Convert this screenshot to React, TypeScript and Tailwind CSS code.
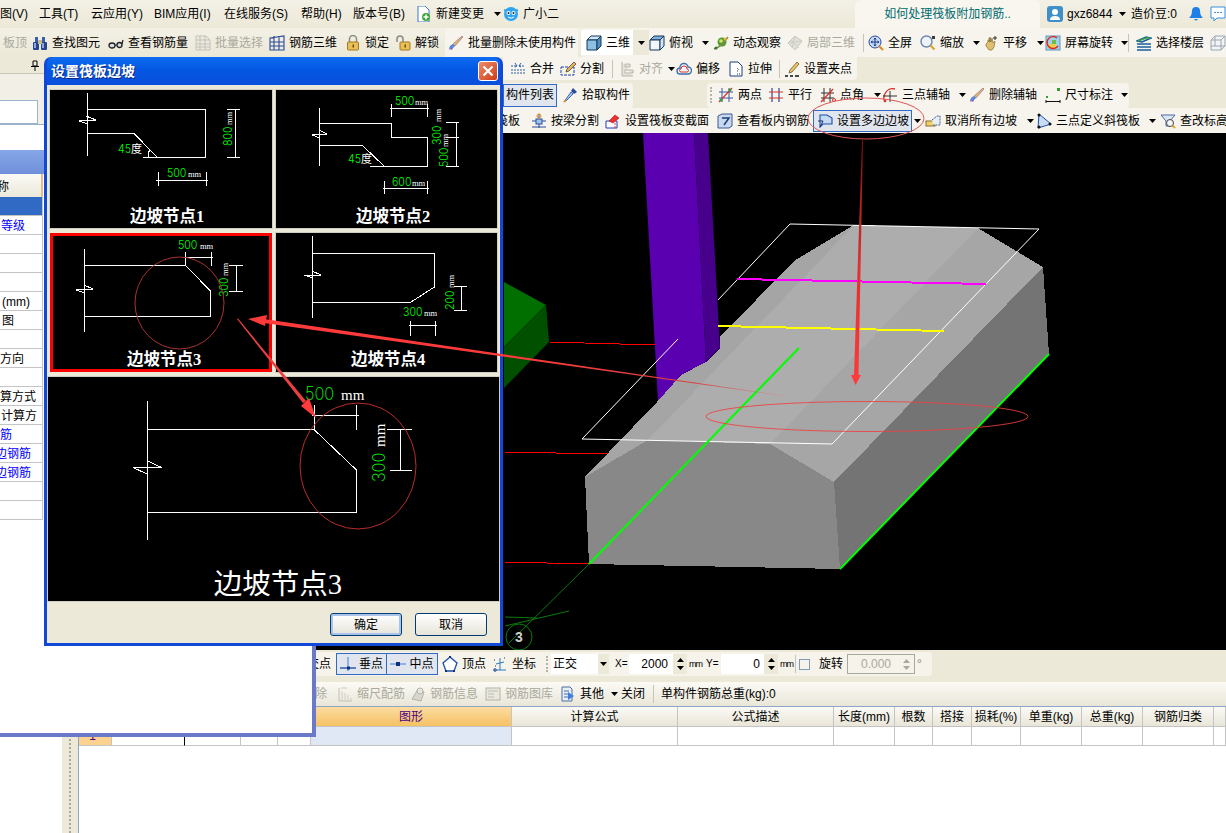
import React from 'react';
import clsx from 'clsx';

const Ic = ({ children }: { children: React.ReactNode }) => (
  <svg width="16" height="16" viewBox="0 0 16 16" className="block shrink-0">{children}</svg>
);

const Caret = ({ className }: { className?: string }) => (
  <svg width="7" height="4" viewBox="0 0 7 4" className={clsx('block shrink-0', className)}>
    <polygon points="0,0 7,0 3.5,4" fill="#000" />
  </svg>
);

// toolbar icons
const Binoc = () => (<Ic><rect x="3" y="2" width="3" height="5" fill="#3a5fae" /><rect x="10" y="2" width="3" height="5" fill="#3a5fae" /><rect x="1" y="7" width="6" height="8" rx="1" fill="#27458f" /><rect x="9" y="7" width="6" height="8" rx="1" fill="#27458f" /><rect x="6" y="5" width="4" height="4" fill="#c8b88c" /><rect x="2" y="8" width="2" height="5" fill="#8fa8de" /><rect x="10" y="8" width="2" height="5" fill="#8fa8de" /></Ic>);
const Glasses = () => (<Ic><ellipse cx="4" cy="10.5" rx="3" ry="2.5" fill="#d8dde4" stroke="#222" strokeWidth="1.3" /><ellipse cx="11.5" cy="10" rx="2.5" ry="2.5" fill="#d8dde4" stroke="#222" strokeWidth="1.3" /><path d="M7 10h2M14 9l1-4" stroke="#222" strokeWidth="1.2" fill="none" /></Ic>);
const GrayGrid = () => (<Ic><path d="M1 1h10l4 4v10H1zM1 5h14M1 9h14M1 12h14M5 1v14M10 1v14" stroke="#c3c2b8" fill="#eceae0" /></Ic>);
const Rebar = () => (<Ic><path d="M1 3l14-2v14H1zM1 7h14M1 11h14M5 1v14M10 1v14" stroke="#2b4a9b" strokeWidth="1.1" fill="none" /></Ic>);
const Lock = ({ open }: { open?: boolean }) => (<Ic>{open ? <path d="M2 7V4a3 3 0 016 0v3" stroke="#8a8a80" strokeWidth="1.5" fill="none" /> : <path d="M4.5 7V4a3.5 3.5 0 017 0v3" stroke="#8a8a80" strokeWidth="1.5" fill="none" />}<rect x={open ? 5 : 2.5} y="7" width={open ? 10 : 11} height="8" rx="1" fill="#e9bf58" stroke="#a07a20" /><rect x={open ? 9.5 : 7.5} y="9.5" width="1.5" height="3" fill="#6b4c10" /></Ic>);
const Brush = () => (<Ic><path d="M14 1l1 1-8 9-2-2z" fill="#e7b36a" stroke="#7d6a8c" strokeWidth=".6" /><path d="M5 9l2 2-3 3H2l-1 1c0-3 1-5 4-6z" fill="#5b86d6" /><path d="M2 14l3-1-1 2z" fill="#c04bb0" /></Ic>);
const Cube = ({ top = '#cfe6f4', front = '#8cc0e0', side = '#4f8dbd' }: { top?: string; front?: string; side?: string }) => (<Ic><polygon points="1,5 5,1 15,1 11,5" fill={top} stroke="#17375e" /><polygon points="1,5 11,5 11,15 1,15" fill={front} stroke="#17375e" /><polygon points="11,5 15,1 15,11 11,15" fill={side} stroke="#17375e" /></Ic>);
const Orbit = () => (<Ic><circle cx="9" cy="7" r="4.5" fill="#4f9e2a" /><circle cx="8" cy="6" r="1.8" fill="#cfe86a" /><path d="M1 14C5 13 11 8 15 2" stroke="#7c8a50" strokeWidth="1.4" fill="none" /><circle cx="12" cy="4" r="1.5" fill="#f0b030" /><circle cx="3" cy="13" r="1.5" fill="#2d7a20" /></Ic>);
const GrayCube = () => (<Ic><polygon points="1,8 8,1 15,6 8,15" fill="#e2e1d9" stroke="#c8c7bd" /><path d="M4 5l8 8M8 1l-3 12M1 8l14-2" stroke="#cfcec4" fill="none" /></Ic>);
const Full = () => (<Ic><circle cx="7" cy="7" r="6" fill="#c6d8f2" stroke="#2b4a9b" /><path d="M7 3v8M3 7h8M7 3L6 4.5M7 3l1 1.5M7 11l-1-1.5M7 11l1-1.5M3 7l1.5-1M3 7l1.5 1M11 7L9.5 6M11 7L9.5 8" stroke="#1b3a8a" fill="none" /><path d="M11 11l4 4" stroke="#e08a20" strokeWidth="2" /></Ic>);
const Zoom = () => (<Ic><circle cx="6.5" cy="6.5" r="5.5" fill="#eef3fa" stroke="#6e86ad" strokeWidth="1.4" /><path d="M10.5 10.5l4 4" stroke="#d9a52c" strokeWidth="2.2" /><rect x="12" y="1" width="3" height="3" fill="#3b3b3b" /></Ic>);
const Pan = () => (<Ic><path d="M3 9l2-2V5l1 2V3l1 4V2l1 5 1-4 1 5 2-2-1 6-2 3H6L3 11z" fill="#dfbf72" stroke="#8a6d2b" strokeWidth=".7" /><path d="M12 1v4M10 3h4" stroke="#333" /></Ic>);
const Rotate = () => (<Ic><rect x="1" y="1" width="14" height="14" fill="#9fd3e8" stroke="#5c97bd" /><rect x="3" y="9" width="8" height="4" fill="#e8cf4a" /><rect x="7" y="5" width="4" height="4" fill="#74b84e" /><path d="M13 11a6 6 0 11-1-8" stroke="#e22626" strokeWidth="1.4" fill="none" /></Ic>);
const Floors = () => (<Ic><path d="M1 6l9-4 5 1-9 4zM1 9h14M1 12h14M1 15h14" stroke="#17609c" strokeWidth="1.6" fill="none" /><path d="M2 6l8-3 4 0" stroke="#3d9e44" strokeWidth="1.4" fill="none" /></Ic>);
const WireCube = () => (<Ic><path d="M1 5l4-4h10v10l-4 4H1zM1 5h10v10M11 5l4-4M5 1v10H1M5 11h10" stroke="#9aa5ae" fill="#f2f4f6" /></Ic>);
const Merge = () => (<Ic><path d="M1 5h6M9 5h6M1 12h14M1 9h14" stroke="#2b5ea8" strokeDasharray="2 1" /><path d="M5 2l2 3-2 1M11 2L9 5l2 1" stroke="#2b5ea8" fill="none" /></Ic>);
const Split = () => (<Ic><rect x="1" y="6" width="13" height="8" fill="#f7f5df" stroke="#1f3cc0" strokeDasharray="3 1" /><path d="M14 1l2 2-7 7-3 1 1-3z" fill="#e6b35a" stroke="#333" strokeWidth=".7" /></Ic>);
const AlignIc = () => (<Ic><path d="M3 1v14h11M6 3h5v3H6zM6 9h8v3H6z" stroke="#b8b7ad" fill="#e3e2d8" /></Ic>);
const Offset = () => (<Ic><path d="M4 13a3 3 0 010-6 4 4 0 018-1 3.5 3.5 0 010 7z" fill="#f4f6fa" stroke="#3a72ad" strokeWidth="1.4" /><path d="M5 11a1.5 1.5 0 010-3 3 3 0 016 0 1.5 1.5 0 010 3z" fill="none" stroke="#d9322a" /></Ic>);
const Stretch = () => (<Ic><path d="M2 1h8l4 4v10H2z" fill="#fff" stroke="#1c3f7a" /><path d="M9 7l2 2M9 10h1M9 13h3" stroke="#1c3f7a" strokeDasharray="1 1" /></Ic>);
const Grip = () => (<Ic><path d="M1 15h3M6 15h3M11 15h4" stroke="#111" strokeWidth="1.5" /><path d="M13 1l2 2-7 8-3 1 1-3z" fill="#e9c56a" stroke="#6d5a2a" strokeWidth=".8" /></Ic>);
const Dropper = () => (<Ic><path d="M11 1l4 4-3 2-3-3z" fill="#2b4a9b" /><path d="M9 5l2 2-6 6-3 2 2-3z" fill="#9cc4ec" stroke="#2b4a9b" strokeWidth=".8" /><path d="M2 15l2-2" stroke="#e08a20" strokeWidth="1.5" /></Ic>);
const TwoPt = () => (<Ic><path d="M4 1v14M11 1v14M1 5h14M1 11h14" stroke="#3b56a8" /><path d="M1 15L14 1" stroke="#d9322a" strokeWidth="1.2" /><circle cx="3" cy="13" r="1.5" fill="#2f9e33" /><circle cx="12" cy="3" r="1.5" fill="#2f9e33" /></Ic>);
const Parallel = () => (<Ic><path d="M4 1v14M11 1v14" stroke="#2b4a9b" strokeWidth="1.2" /><path d="M1 5h14M1 11h14" stroke="#d9322a" strokeWidth="1.2" /></Ic>);
const PtAngle = () => (<Ic><path d="M4 1v14M10 1v14M1 6h13M1 11h13" stroke="#333" /><path d="M1 15L13 2" stroke="#d9322a" strokeWidth="1.3" /><circle cx="14" cy="13" r="1.5" fill="none" stroke="#d9322a" /></Ic>);
const Arc3 = () => (<Ic><path d="M3 15A9 9 0 0113 2" stroke="#d9322a" fill="none" strokeWidth="1.3" /><path d="M8 4v11M1 9h14" stroke="#333" /><circle cx="3" cy="14" r="1.3" fill="#d9322a" /></Ic>);
const Dim = () => (<Ic><rect x="1" y="9" width="2" height="2" fill="#2f9e33" /><rect x="12" y="1" width="3" height="3" fill="#2f9e33" /><path d="M1 13v3M15 13v3M1 14.5h14" stroke="#111" /></Ic>);
const Beam = () => (<Ic><rect x="5" y="6" width="6" height="5" fill="#9cc4ec" stroke="#2b4a9b" /><path d="M1 8h4M11 8h4M1 14h14M8 1v4M8 11v4" stroke="#2b4a9b" /><circle cx="8" cy="3" r="2" fill="none" stroke="#e08a20" /></Ic>);
const Section = () => (<Ic><path d="M1 8h11v7H1z" fill="#fff" stroke="#1f3cc0" /><path d="M4 8l6-6 4 3-6 5z" fill="#e33" stroke="#a11" strokeWidth=".6" /><path d="M10 10v5" stroke="#e33" strokeDasharray="2 1" /></Ic>);
const ViewRebar = () => (<Ic><path d="M1 3l4-2h10v12l-3 2H1z" fill="#c9d8ee" stroke="#3a5a94" /><path d="M5 5h7L7 12" stroke="#1c3f7a" strokeWidth="1.5" fill="none" /></Ic>);
const MultiSlope = () => (<Ic><path d="M3 14l3-3H15V5L10 2H3z" fill="#c6daf2" stroke="#1c4fa8" strokeWidth="1.1" /><path d="M1 8h5l-3 6" stroke="#1c2f7a" fill="none" /></Ic>);
const Cancel = () => (<Ic><rect x="1" y="8" width="9" height="5" fill="#f1d26a" stroke="#8a6d2b" /><path d="M7 7l5-4h3v9H8" fill="#e9edf4" stroke="#3a5a94" strokeDasharray="2 1" /></Ic>);
const Tri = () => (<Ic><polygon points="3,1 15,11 2,15" fill="#c8dcf4" stroke="#1c4fa8" /><circle cx="3" cy="2" r="1.5" fill="#111" /><circle cx="14" cy="11" r="1.5" fill="#111" /><circle cx="3" cy="14" r="1.5" fill="#111" /></Ic>);
const CheckH = () => (<Ic><path d="M1 2h14l-5 6v5H6V8z" fill="#dde6f2" stroke="#4a6da3" /><circle cx="10" cy="10" r="3.5" fill="#f5f7fb" stroke="#444" /><path d="M12.5 12.5L15 15" stroke="#d9a52c" strokeWidth="2" /></Ic>);
const DocAdd = () => (<Ic><path d="M2 0h7l4 4v12H2z" fill="#fff" stroke="#3f78c4" /><circle cx="10" cy="11" r="4" fill="#43a43a" /><path d="M10 8.5v5M7.5 11h5" stroke="#fff" strokeWidth="1.5" /></Ic>);
const Mascot = () => (<Ic><circle cx="8" cy="8" r="7" fill="#2fa4f0" /><path d="M1 4l3 1M15 4l-3 1" stroke="#2fa4f0" strokeWidth="2" /><circle cx="5.5" cy="7" r="2" fill="#fff" /><circle cx="10.5" cy="7" r="2" fill="#fff" /><circle cx="5.5" cy="7" r="1" fill="#123" /><circle cx="10.5" cy="7" r="1" fill="#123" /><path d="M5 11q3 2.5 6 0" stroke="#fff" fill="none" /></Ic>);
const Avatar = () => (<Ic><rect x="0" y="0" width="16" height="16" rx="3" fill="#3f8fca" /><circle cx="8" cy="6" r="3" fill="#fff" /><path d="M3 14q0-4 5-4t5 4z" fill="#fff" /></Ic>);
const Bell = () => (<Ic><path d="M8 1a4 4 0 00-4 4c0 4-2 6-3 7h14c-1-1-3-3-3-7a4 4 0 00-4-4z" fill="#1f7fe8" /><path d="M6 13q2 3 4 0z" fill="#1f7fe8" /></Ic>);
const Chat = () => (<Ic><path d="M1 1h14v11H7l-3 3v-3H1z" fill="#fff" stroke="#3a8fe0" /><path d="M4 6.5h2M7 6.5h2M10 6.5h2" stroke="#3a8fe0" /></Ic>);
const Perp = () => (<Ic><path d="M8 1v14" stroke="#6f9fe0" strokeWidth="1.5" /><path d="M0 12h16" stroke="#2b5ea8" strokeWidth="1.5" /><rect x="7" y="10.5" width="3" height="3" fill="#12307a" /></Ic>);
const Mid = () => (<Ic><path d="M0 8h16" stroke="#6f9fe0" strokeWidth="1.5" /><rect x="6" y="6" width="4" height="4" fill="#12307a" /></Ic>);
const Vertex = () => (<Ic><polygon points="8,1 15,7 12,15 4,15 1,7" fill="#fff" stroke="#1c4fa8" strokeWidth="1.3" /><rect x="7" y="0" width="2" height="2" fill="#12307a" /><rect x="3" y="14" width="2" height="2" fill="#12307a" /><rect x="11" y="14" width="2" height="2" fill="#12307a" /></Ic>);
const Coord = () => (<Ic><path d="M8 2v12M2 14h12M4 8l8-2" stroke="#2b7ac0" /><path d="M2 4h2M12 2h2M3 10h2" stroke="#333" strokeDasharray="1 1" /><circle cx="3" cy="14" r="1.3" fill="none" stroke="#2b4a9b" /></Ic>);
const Scale = () => (<Ic><path d="M2 2v13h13" stroke="#c2c1b6" fill="none" /><path d="M5 15V5M8 15V7M11 15V9M14 15v-3M4 2h6" stroke="#cfcec3" fill="none" /></Ic>);
const GrayInfo = () => (<Ic><path d="M2 13l6-10 6 3-3 9z" fill="#d8d7cd" stroke="#b4b3a9" /><circle cx="10" cy="5" r="3" fill="#e7e6dc" stroke="#b4b3a9" /></Ic>);
const GrayLib = () => (<Ic><rect x="1" y="2" width="14" height="12" fill="#e9e8de" stroke="#b4b3a9" /><path d="M3 5h10M3 8h6M3 11h6" stroke="#bcbbb0" /></Ic>);
const Other = () => (<Ic><path d="M2 1h8l2 2v12H2z" fill="#e9eff8" stroke="#4a6da3" /><path d="M4 5h5M4 8h4M4 11h4" stroke="#4a6da3" /><path d="M8 6l6 4-6 4z" fill="#3b7de0" /></Ic>);
const PinIc = () => (
  <svg width="8" height="11" viewBox="0 0 8 11" className="block">
    <path d="M2 1h4v5H2zM0 6.5h8M4 7v4" stroke="#000" fill="none" />
  </svg>
);

type ToolProps = { w: string; icon?: React.ReactNode; label: string; dim?: boolean; caret?: string };

function Tool({ w, icon, label, dim, caret }: ToolProps) {
  return (
    <div className={clsx('flex items-center shrink-0 h-full gap-[4px]', w)}>
      {icon}
      <span className={clsx('whitespace-nowrap', dim ? 'text-[#aaa99d]' : 'text-black')}>{label}</span>
      {caret && <Caret className={caret} />}
    </div>
  );
}

const Sep = ({ className }: { className?: string }) => (
  <div className={clsx('w-px h-[18px] bg-[#c6c4b6] shrink-0', className)} />
);

// ------------ CAD drawings in the dialog. viewBoxes use page coordinates.
function G({ x, y, children, size = 12, rotate }: { x: number; y: number; children: string; size?: number; rotate?: boolean }) {
  return (
    <text
      x={x}
      y={y}
      fill="#00ff00"
      fontSize={size}
      fontWeight={size > 12 ? 200 : 300}
      fontFamily="Inter, Liberation Sans, sans-serif"
      textLength={children.length * size * 0.54}
      lengthAdjust="spacingAndGlyphs"
      transform={rotate ? `rotate(-90 ${x} ${y})` : undefined}
    >
      {children}
    </text>
  );
}

function W({ x, y, children, size = 8.5, rotate }: { x: number; y: number; children: string; size?: number; rotate?: boolean }) {
  return (
    <text x={x} y={y} fill="#fff" fontSize={size} fontFamily="Liberation Serif, serif" transform={rotate ? `rotate(-90 ${x} ${y})` : undefined}>
      {children}
    </text>
  );
}

function Title({ x, y, size = 16.5, bold = true, children }: { x: number; y: number; size?: number; bold?: boolean; children: React.ReactNode }) {
  return (
    <text x={x} y={y} fill="#fff" fontSize={size} fontWeight={bold ? 700 : 400} textAnchor="middle" fontFamily="Liberation Serif, Noto Sans CJK SC, serif">
      {children}
    </text>
  );
}

const Wire = ({ d }: { d: string }) => <path d={d} stroke="#fff" strokeWidth="1" fill="none" shapeRendering="crispEdges" />;

function Panel1() {
  return (
    <svg viewBox="50 90 222 138" className="block w-full h-full">
      <Wire d="M87.5 93V156M87.5 109.5H205.5V157H143M87.5 133.5H134L157 157" />
      <Wire d="M79 121L96 120L86 116M79 121L88 124" />
      <Wire d="M235.5 109V157M227 109.5H240M227 157.5H240M158.5 172V186M206 172V186M156 180.5H208" />
      <Wire d="M148 157Q148 152 150 150" />
      <G x={118} y={153}>45</G>
      <text x={131} y={153} fill="#fff" fontSize={11} fontFamily="Noto Sans CJK SC, sans-serif">度</text>
      <G x={167} y={177}>500</G>
      <W x={188} y={177}>mm</W>
      <G x={232} y={146} rotate>800</G>
      <W x={232} y={125} rotate>mm</W>
      <Title x={167} y={222}>边坡节点1</Title>
    </svg>
  );
}

function Panel2() {
  return (
    <svg viewBox="276 90 221 138" className="block w-full h-full">
      <Wire d="M319.5 108V165.5M319.5 123.5H391.5V137.5H427.5V166.5H370M319.5 145.5H362.5L384.5 166.5" />
      <Wire d="M312 135L327 134L319 130M312 135L320 138" />
      <Wire d="M391.5 104V117M427.5 104V117M390 108.5H429M456.5 122V166M446 122.5H459M446 137.5H459M446 166.5H459M384.5 181V194M427.5 181V194M383 188.5H429" />
      <G x={395} y={105}>500</G>
      <W x={415} y={105}>mm</W>
      <G x={392} y={186}>600</G>
      <W x={412} y={186}>mm</W>
      <G x={348} y={163}>45</G>
      <text x={361} y={163} fill="#fff" fontSize={11} fontFamily="Noto Sans CJK SC, sans-serif">度</text>
      <G x={441} y={145} rotate>300</G>
      <W x={441} y={122} rotate>mm</W>
      <G x={448} y={167} rotate>500</G>
      <W x={448} y={147} rotate>mm</W>
      <Title x={393} y={222}>边坡节点2</Title>
    </svg>
  );
}

function Panel3() {
  return (
    <svg viewBox="50 233 222 139" className="block w-full h-full">
      <rect x="51.5" y="234.5" width="219" height="136" fill="none" stroke="#ff0000" strokeWidth="3" />
      <Wire d="M84.5 249V332M84.5 265.5H185.5L210.5 291V316.5H84.5" />
      <Wire d="M76 290L93 289L84 285M76 290L85 293" />
      <Wire d="M185.5 252V266M211 252V266M183 257.5H213M236.5 265V292M229 265.5H243M229 291.5H243" />
      <G x={178} y={249}>500</G>
      <W x={200} y={249}>mm</W>
      <G x={228} y={297} rotate>300</G>
      <W x={228} y={276} rotate>mm</W>
      <Title x={164} y={365}>边坡节点3</Title>
    </svg>
  );
}

function Panel4() {
  return (
    <svg viewBox="276 233 221 139" className="block w-full h-full">
      <Wire d="M312.5 236V318M312.5 253.5H434.5V287L411 302H312.5" />
      <Wire d="M304 275L321 275L312 271M304 275L313 278" />
      <Wire d="M461.5 286V310M454 286.5H467M454 310.5H467M410.5 321V336M435 321V336M409 325.5H437" />
      <G x={403} y={316}>300</G>
      <W x={424} y={316}>mm</W>
      <G x={454} y={310} rotate>200</G>
      <W x={454} y={288} rotate>mm</W>
      <Title x={388} y={365}>边坡节点4</Title>
    </svg>
  );
}

function PanelBig() {
  return (
    <svg viewBox="48 377 451 224" className="block w-full h-full">
      <Wire d="M147.5 401V540M147.5 429.5H314L356.5 470V512.5H147.5" />
      <Wire d="M133 467.5H161.5L148 461M133 467.5L147 474" />
      <Wire d="M314.5 405V430M356.5 405V430M312 415.5H359M400.5 429V471M387 429.5H412M390 470.5H412" />
      <G x={305} y={400} size={18}>500</G>
      <W x={341} y={400} size={15}>mm</W>
      <G x={385} y={482} rotate size={18}>300</G>
      <W x={385} y={447} rotate size={15}>mm</W>
      <Title x={278} y={594} size={28.5} bold={false}>边坡节点3</Title>
    </svg>
  );
}

function Scene() {
  return (
    <svg viewBox="44 133 1182 517" className="block w-full h-full">
      {/* green block */}
      <polygon points="504,282 546,305 504,347" fill="#006f00" />
      <polygon points="504,347 546,305 549,342 504,388" fill="#005000" />
      {/* purple column */}
      <polygon points="643,133 694,133 706,362 681,375 658,402" fill="#5a00b0" />
      <polygon points="694,133 708,133 720,348 706,362" fill="#46008c" />
      {/* red axis lines */}
      <g stroke="#ff0000" strokeWidth="1" shapeRendering="crispEdges" fill="none">
        <path d="M549 342L655 345" />
        <path d="M504 452L607 454" />
        <path d="M504 562L589 564" />
      </g>
      {/* slab */}
      <g shapeRendering="crispEdges">
        <polygon points="585,477 648,440 854,225 794,261 720,337 720,348 706,362 681,375 657,402" fill="#a5a5a5" />
        <polygon points="648,440 770,444 978,228 854,225" fill="#adadad" />
        <polygon points="770,444 834,482 1043,267 978,228" fill="#a6a6a6" />
        <polygon points="585,477 648,440 770,444 834,482 840,569 589,564" fill="#888888" />
        <polygon points="834,482 1043,267 1049,354 840,569" fill="#747474" />
      </g>
      {/* plan outline */}
      <path d="M790 224L1039 229L832 444L582 439L678 339M718 300L790 224" stroke="#fff" strokeWidth="1" fill="none" />
      <path d="M737 279L986 284" stroke="#ff00ff" strokeWidth="2" shapeRendering="crispEdges" />
      <path d="M718 326L944 331" stroke="#ffff00" strokeWidth="2" shapeRendering="crispEdges" />
      <path d="M799 348L589 564M1049 354L840 569" stroke="#00ff00" strokeWidth="2" />
      <path d="M589 564L509 643M505 617L537 618M569 611L505 626" stroke="#0a7a0a" strokeWidth="1" fill="none" />
      <circle cx="519" cy="637" r="13" fill="none" stroke="#0a7a0a" />
      <text x="519" y="642" fill="#cfcfcf" fontSize="14" fontWeight="700" textAnchor="middle" fontFamily="Liberation Sans, sans-serif">3</text>
    </svg>
  );
}

// red marks somebody painted over the screenshot
function Annotations() {
  return (
    <svg viewBox="0 0 1226 833" className="absolute inset-0 z-30 w-full h-full pointer-events-none">
      <defs>
        <linearGradient id="fade" gradientUnits="userSpaceOnUse" x1="500" y1="354" x2="783" y2="396">
          <stop offset="0" stopColor="#ff3a3a" />
          <stop offset="0.7" stopColor="#d84040" />
          <stop offset="1" stopColor="#d88080" stopOpacity="0.6" />
        </linearGradient>
        <linearGradient id="drop" gradientUnits="userSpaceOnUse" x1="862" y1="140" x2="856" y2="385">
          <stop offset="0" stopColor="#7a1010" />
          <stop offset="0.5" stopColor="#e03030" />
          <stop offset="1" stopColor="#ff3a3a" />
        </linearGradient>
      </defs>
      <ellipse cx="866" cy="118.5" rx="58" ry="20.5" fill="none" stroke="#e25555" strokeWidth="1" />
      <polygon points="862,140 863,140 858.5,375 854,375" fill="url(#drop)" />
      <polygon points="851,375 861,375 855.5,385" fill="#ff3a3a" />
      <ellipse cx="867" cy="416.5" rx="161" ry="15" fill="none" stroke="#f04040" strokeWidth="1" opacity="0.85" />
      <polygon points="264,319 264,323 783,396 783,395.5" fill="url(#fade)" />
      <polygon points="248,319 267,315 265,326" fill="#ff3a3a" />
      <polygon points="237,319 238,318.5 306,401 303,403" fill="#e94040" />
      <polygon points="316,418 301,406 309,398" fill="#ff3a3a" />
      <ellipse cx="179.5" cy="303" rx="44.5" ry="46" fill="none" stroke="#a83232" strokeWidth="1" />
      <ellipse cx="358" cy="466" rx="58" ry="63" fill="none" stroke="#b92c2c" strokeWidth="1" />
    </svg>
  );
}

const panelRows: { text: string; cls?: string; sel?: boolean }[] = [
  { text: '', sel: true },
  { text: '等级', cls: 'text-[#0000ff] ml-px' },
  { text: '' },
  { text: '' },
  { text: '' },
  { text: '(mm)', cls: 'text-black ml-[2px]' },
  { text: '图', cls: 'text-black ml-[2px]' },
  { text: '' },
  { text: '方向', cls: 'text-black' },
  { text: '' },
  { text: '算方式', cls: 'text-black' },
  { text: '计算方', cls: 'text-black ml-px' },
  { text: '筋', cls: 'text-[#0000ff]' },
  { text: '边钢筋', cls: 'text-[#0000ff] ml-[-5px]' },
  { text: '边钢筋', cls: 'text-[#0000ff] ml-[-5px]' },
  { text: '' },
  { text: '' },
];

const columns = ['', '', '', '', '', '图形', '计算公式', '公式描述', '长度(mm)', '根数', '搭接', '损耗(%)', '单重(kg)', '总重(kg)', '钢筋归类', ''];

const DlgButton = ({ label, active }: { label: string; active?: boolean }) => (
  <button
    className={clsx(
      'w-[72px] h-[23px] rounded-[3px] border border-[#003c74] bg-linear-to-b from-white to-[#e6e4da] text-[12px] text-black',
      active && 'shadow-[inset_0_0_0_2px_#a9c4ec]',
    )}
  >
    {label}
  </button>
);

export default function App() {
  return (
    <div className="relative w-[1226px] h-[833px] overflow-hidden bg-[#ece9d8] text-[12px] leading-none text-black font-['Liberation_Sans','Noto_Sans_CJK_SC',sans-serif]">
      {/* menu bar */}
      <div className="flex items-center h-[28px] bg-linear-to-b from-[#f3f0e6] to-[#ece9d8]">
        <Tool w="w-[39px]" label="图(V)" />
        <Tool w="w-[52px]" label="工具(T)" />
        <Tool w="w-[63px]" label="云应用(Y)" />
        <Tool w="w-[70px]" label="BIM应用(I)" />
        <Tool w="w-[77px]" label="在线服务(S)" />
        <Tool w="w-[52px]" label="帮助(H)" />
        <Tool w="w-[63px]" label="版本号(B)" />
        <Tool w="w-[87px]" icon={<DocAdd />} label="新建变更" caret="ml-[6px]" />
        <Tool w="w-[352px]" icon={<Mascot />} label="广小二" />
        <div className="flex items-center justify-center w-[185px] h-full rounded-t-md bg-[#f8f6ef] text-[#006a6e]">
          <span className="whitespace-nowrap">如何处理筏板附加钢筋..</span>
        </div>
        <div className="w-[7px] h-full" />
        <div className="flex items-center h-full w-[84px] gap-[4px]">
          <Avatar />
          <span>gxz6844</span>
          <Caret className="ml-[3px]" />
        </div>
        <span className="w-[57px] whitespace-nowrap">造价豆:0</span>
        <div className="w-[22px]"><Bell /></div>
        <Chat />
      </div>

      {/* main toolbar */}
      <div className="flex items-center h-[29px] bg-linear-to-b from-[#f3f0e6] to-[#ece9d8]">
        <div className="w-[34px] pl-[3px] text-[#aaa99d] whitespace-nowrap">板顶</div>
        <Tool w="w-[76px]" icon={<Binoc />} label="查找图元" />
        <Tool w="w-[87px]" icon={<Glasses />} label="查看钢筋量" />
        <Tool w="w-[74px]" icon={<GrayGrid />} label="批量选择" dim />
        <Tool w="w-[76px]" icon={<Rebar />} label="钢筋三维" />
        <Tool w="w-[50px]" icon={<Lock />} label="锁定" />
        <Tool w="w-[50px]" icon={<Lock open />} label="解锁" />
        <div className="flex items-center h-full w-[133px] pl-[3px] bg-[#f6f4ec]">
          <Tool w="w-[130px]" icon={<Brush />} label="批量删除未使用构件" />
        </div>
        <div className="flex items-center h-full flex-1 ml-[3px] rounded-l bg-[#f6f4ec]">
          <div className="flex items-center h-[25px] w-[52px] pl-[5px] bg-white shrink-0">
            <Tool w="w-[47px]" icon={<Cube />} label="三维" />
          </div>
          <div className="flex items-center justify-center h-[25px] w-[16px] bg-[#ece9d8] shrink-0"><Caret /></div>
          <Tool w="w-[64px]" icon={<Cube top="#7fb0dc" front="#f2f7fb" side="#d3e4f2" />} label="俯视" caret="ml-[5px]" />
          <Tool w="w-[74px]" icon={<Orbit />} label="动态观察" />
          <Tool w="w-[76px]" icon={<GrayCube />} label="局部三维" dim />
          <Sep />
          <div className="w-[4px]" />
          <Tool w="w-[52px]" icon={<Full />} label="全屏" />
          <Tool w="w-[63px]" icon={<Zoom />} label="缩放" caret="ml-[5px]" />
          <Tool w="w-[62px]" icon={<Pan />} label="平移" caret="ml-[6px]" />
          <Tool w="w-[83px]" icon={<Rotate />} label="屏幕旋转" caret="ml-[4px]" />
          <Sep />
          <div className="w-[7px]" />
          <Tool w="w-[74px]" icon={<Floors />} label="选择楼层" />
          <WireCube />
        </div>
      </div>

      {/* body: property panel + drawing area */}
      <div className="flex h-[593px]">
        <div className="w-[44px] shrink-0 flex flex-col bg-white overflow-hidden">
          <div className="flex items-center justify-end h-[17px] pr-[5px] border-b border-[#c8c6b8] bg-[#ece9d8]"><PinIc /></div>
          <div className="h-[51px] pt-[26px] bg-[#f2f0e6] border-b border-[#9cb0c8]">
            <div className="w-[38px] h-[24px] bg-white border-r border-y border-[#9db3cc]" />
          </div>
          <div className="h-[25px]" />
          <div className="h-[24px] bg-linear-to-b from-[#86a6e8] to-[#6f90da]" />
          <div className="h-[23px] w-[43px] pt-[2px] flex items-center overflow-hidden bg-linear-to-b from-[#fbfaf5] to-[#ebe8da] border-r-2 border-[#e6bd84]">
            <span className="ml-[-3px]">称</span>
          </div>
          {panelRows.map((r, i) => (
            <div key={i} className={clsx('h-[19px] w-[43px] pt-[2px] flex items-center shrink-0 overflow-hidden border-b border-r border-[#c4c4c4] whitespace-nowrap', r.sel && 'bg-[#316ac5]')}>
              <span className={r.cls}>{r.text}</span>
            </div>
          ))}
        </div>

        <div className="flex-1 min-w-0 flex flex-col">
          <div className="h-[25px] shrink-0 flex items-start">
            <div className="flex items-center ml-[459px] pl-[7px] w-[354px] h-[23px] rounded-br bg-[#f6f4ec]">
              <Tool w="w-[50px]" icon={<Merge />} label="合并" />
              <Tool w="w-[52px]" icon={<Split />} label="分割" />
              <Sep />
              <div className="w-[6px]" />
              <Tool w="w-[57px]" icon={<AlignIc />} label="对齐" dim caret="ml-px" />
              <Tool w="w-[52px]" icon={<Offset />} label="偏移" />
              <Tool w="w-[51px]" icon={<Stretch />} label="拉伸" />
              <Sep />
              <div className="w-[4px]" />
              <Tool w="w-[70px]" icon={<Grip />} label="设置夹点" />
            </div>
          </div>
          <div className="h-[26px] shrink-0 flex items-center">
            <div className="flex items-center ml-[459px] h-[25px] w-[130px] rounded-r bg-[#f6f4ec]">
              <div className="flex items-center justify-center w-[54px] h-[23px] shrink-0 bg-[#e1e6ee] border border-[#316ac5]">构件列表</div>
              <div className="w-[5px]" />
              <Tool w="w-[70px]" icon={<Dropper />} label="拾取构件" />
            </div>
            <div className="flex items-center ml-[74px] w-[422px] h-[25px] pl-[3px] rounded bg-[#f6f4ec]">
              <div className="w-0 h-[16px] border-l-2 border-dotted border-[#b5b3a6]" />
              <div className="w-[6px]" />
              <Tool w="w-[50px]" icon={<TwoPt />} label="两点" />
              <Tool w="w-[52px]" icon={<Parallel />} label="平行" />
              <Tool w="w-[62px]" icon={<PtAngle />} label="点角" caret="ml-[6px]" />
              <Tool w="w-[87px]" icon={<Arc3 />} label="三点辅轴" caret="ml-[5px]" />
              <Tool w="w-[76px]" icon={<Brush />} label="删除辅轴" />
              <Tool w="w-[84px]" icon={<Dim />} label="尺寸标注" caret="ml-[4px]" />
            </div>
          </div>
          <div className="h-[25px] shrink-0 flex items-center pl-[452px] bg-[#f6f4ec]">
            <Tool w="w-[35px]" label="筏板" />
            <Tool w="w-[74px]" icon={<Beam />} label="按梁分割" />
            <Tool w="w-[112px]" icon={<Section />} label="设置筏板变截面" />
            <Tool w="w-[96px]" icon={<ViewRebar />} label="查看板内钢筋" />
            <div className="flex items-center w-[99px] h-[22px] pl-[3px] shrink-0 bg-[#e1e6ee] border border-[#316ac5]">
              <Tool w="w-[94px]" icon={<MultiSlope />} label="设置多边边坡" />
            </div>
            <Caret className="ml-[2px]" />
            <div className="w-[5px]" />
            <Tool w="w-[111px]" icon={<Cancel />} label="取消所有边坡" caret="ml-[6px]" />
            <Tool w="w-[124px]" icon={<Tri />} label="三点定义斜筏板" caret="ml-[5px]" />
            <Tool w="w-[66px]" icon={<CheckH />} label="查改标高" />
          </div>
          <div className="flex-1 min-h-0 bg-black">
            <Scene />
          </div>
        </div>
      </div>

      {/* snap toolbar */}
      <div className="h-[32px] pt-[2px]">
        <div className="flex items-center h-[24px] w-[932px] pl-[307px] rounded-r bg-[#f5f3ea]">
          <Tool w="w-[29px]" label="交点" />
          <div className="flex items-center justify-center gap-[3px] w-[51px] h-[22px] shrink-0 bg-[#e1e6ee] border border-[#316ac5]"><Perp /><span>垂点</span></div>
          <div className="flex items-center justify-center gap-[3px] w-[51px] h-[22px] shrink-0 bg-[#e1e6ee] border border-[#316ac5] border-l-0"><Mid /><span>中点</span></div>
          <div className="w-[4px]" />
          <Tool w="w-[50px]" icon={<Vertex />} label="顶点" />
          <Tool w="w-[54px]" icon={<Coord />} label="坐标" />
          <div className="w-0 h-[16px] border-l-2 border-dotted border-[#b5b3a6]" />
          <div className="w-[3px]" />
          <div className="flex items-center w-[47px] h-[20px] pl-[2px] bg-white shrink-0">正交</div>
          <div className="flex items-center justify-center w-[11px] h-[20px] bg-[#ece9d8] shrink-0"><Caret /></div>
          <div className="w-[6px]" />
          <span className="w-[14px] text-[10px]">X=</span>
          <div className="flex items-center justify-end w-[44px] h-[20px] pr-[5px] bg-white shrink-0">2000</div>
          <div className="flex flex-col items-center justify-center gap-[4px] w-[14px] h-[20px] shrink-0 bg-[#ece9d8]">
            <Caret className="rotate-180" />
            <Caret />
          </div>
          <span className="w-[19px] pl-[2px] text-[9px] tracking-[-1px]">mm</span>
          <span className="w-[15px] text-[10px]">Y=</span>
          <div className="flex items-center justify-end w-[43px] h-[20px] pr-[4px] bg-white shrink-0">0</div>
          <div className="flex flex-col items-center justify-center gap-[4px] w-[14px] h-[20px] shrink-0 bg-[#ece9d8]">
            <Caret className="rotate-180" />
            <Caret />
          </div>
          <span className="w-[17px] pl-[2px] text-[9px] tracking-[-1px]">mm</span>
          <Sep className="h-[16px]" />
          <div className="w-[3px]" />
          <div className="w-[11px] h-[11px] border border-[#7f9db9] bg-[#f5f3ea] shrink-0" />
          <div className="w-[9px]" />
          <span className="w-[28px] whitespace-nowrap">旋转</span>
          <div className="flex items-center justify-between w-[68px] h-[20px] pl-[13px] pr-[4px] shrink-0 border border-[#a9a89c] text-[#aaa99d]">
            <span>0.000</span>
            <div className="flex flex-col gap-[3px]">
              <svg width="7" height="4" viewBox="0 0 7 4"><polygon points="0,4 7,4 3.5,0" fill="#aaa99d" /></svg>
              <svg width="7" height="4" viewBox="0 0 7 4"><polygon points="0,0 7,0 3.5,4" fill="#aaa99d" /></svg>
            </div>
          </div>
          <span className="ml-[2px] text-[#888]">°</span>
        </div>
      </div>

      {/* rebar toolbar */}
      <div className="flex items-center h-[24px] pl-[303px] bg-linear-to-b from-[#fbfaf5] to-[#e9e6d8]">
        <Tool w="w-[34px]" label="删除" dim />
        <Tool w="w-[73px]" icon={<Scale />} label="缩尺配筋" dim />
        <Tool w="w-[75px]" icon={<GrayInfo />} label="钢筋信息" dim />
        <Tool w="w-[75px]" icon={<GrayLib />} label="钢筋图库" dim />
        <Tool w="w-[61px]" icon={<Other />} label="其他" caret="ml-[3px]" />
        <Tool w="w-[32px]" label="关闭" />
        <Sep />
        <div className="w-[7px]" />
        <span className="whitespace-nowrap">单构件钢筋总重(kg):0</span>
      </div>

      {/* rebar table */}
      <div className="flex h-[127px] border-t border-[#8ba6c6] bg-white">
        <div className="w-[62px] shrink-0" />
        <div className="flex justify-center w-[17px] shrink-0 bg-[#ece9d8] border-r border-[#8ba6c6]">
          <div className="w-0 h-full border-l-2 border-dotted border-[#aaa89a]" />
        </div>
        <div className="flex-1 min-w-0">
          <div className="grid grid-cols-[33px_73px_56px_37px_33px_201px_166px_156px_61px_38px_39px_49px_61px_61px_71px_12px] h-[20px]">
            {columns.map((label, i) => (
              <div
                key={i}
                className={clsx(
                  'flex items-center justify-center whitespace-nowrap border-r border-b border-[#c4c4c4]',
                  i === 5 ? 'bg-linear-to-b from-[#fbdca0] to-[#f5c163] text-[#4b0082]' : 'bg-linear-to-b from-[#fbfaf5] to-[#e9e6d8]',
                )}
              >
                {label}
              </div>
            ))}
          </div>
          <div className="grid grid-cols-[33px_73px_56px_37px_33px_201px_166px_156px_61px_38px_39px_49px_61px_61px_71px_12px] h-[19px]">
            {columns.map((_, i) => (
              <div
                key={i}
                className={clsx(
                  'flex items-center justify-center border-b border-[#c4c4c4]',
                  i === 1 ? 'border-r border-r-black' : 'border-r',
                  i === 0 && 'bg-[#fdd28f] text-[#4b0082]',
                  i === 5 && 'bg-[#dfe8f4]',
                )}
              >
                {i === 0 ? '1*' : ''}
              </div>
            ))}
          </div>
        </div>
      </div>

      {/* floating white window under the dialog */}
      <div className="absolute left-0 top-[640px] z-10 w-[316px] h-[97px] bg-white border-r-4 border-b-4 border-[#6b7ac8]" />

      {/* dialog */}
      <div className="absolute left-[44px] top-[57px] z-20 flex flex-col w-[459px] h-[589px] rounded-t-[7px] bg-[#1148d8] p-[3px] pt-0">
        <div className="flex items-center justify-between h-[28px] shrink-0 pl-[4px] pr-[2px] rounded-t-[6px] bg-linear-to-b from-[#0f6cf0] via-[#0456e2] to-[#0a50dc]">
          <span className="text-[14px] font-bold text-white [text-shadow:1px_1px_0_#0a2a80]">设置筏板边坡</span>
          <div className="flex items-center justify-center w-[20px] h-[20px] rounded-[3px] border border-white bg-linear-to-br from-[#ee8a66] to-[#cc3a14]">
            <svg width="12" height="12" viewBox="0 0 12 12"><path d="M1.5 1.5l9 9M10.5 1.5l-9 9" stroke="#fff" strokeWidth="2.2" /></svg>
          </div>
        </div>
        <div className="flex flex-col flex-1 min-h-0 bg-[#ece9d8] pt-[5px] px-px">
          <div className="grid grid-cols-[222px_221px] grid-rows-[138px_139px] gap-x-[4px] gap-y-[5px] pl-[2px]">
            <div className="bg-black outline outline-[#d0cebf]"><Panel1 /></div>
            <div className="bg-black outline outline-[#d0cebf]"><Panel2 /></div>
            <div className="bg-black"><Panel3 /></div>
            <div className="bg-black outline outline-[#d0cebf]"><Panel4 /></div>
          </div>
          <div className="h-[224px] mt-[5px] bg-black outline outline-[#d0cebf]"><PanelBig /></div>
          <div className="flex justify-end gap-[13px] pt-[12px] pr-[12px]">
            <DlgButton label="确定" active />
            <DlgButton label="取消" />
          </div>
        </div>
      </div>

      <Annotations />
    </div>
  );
}
